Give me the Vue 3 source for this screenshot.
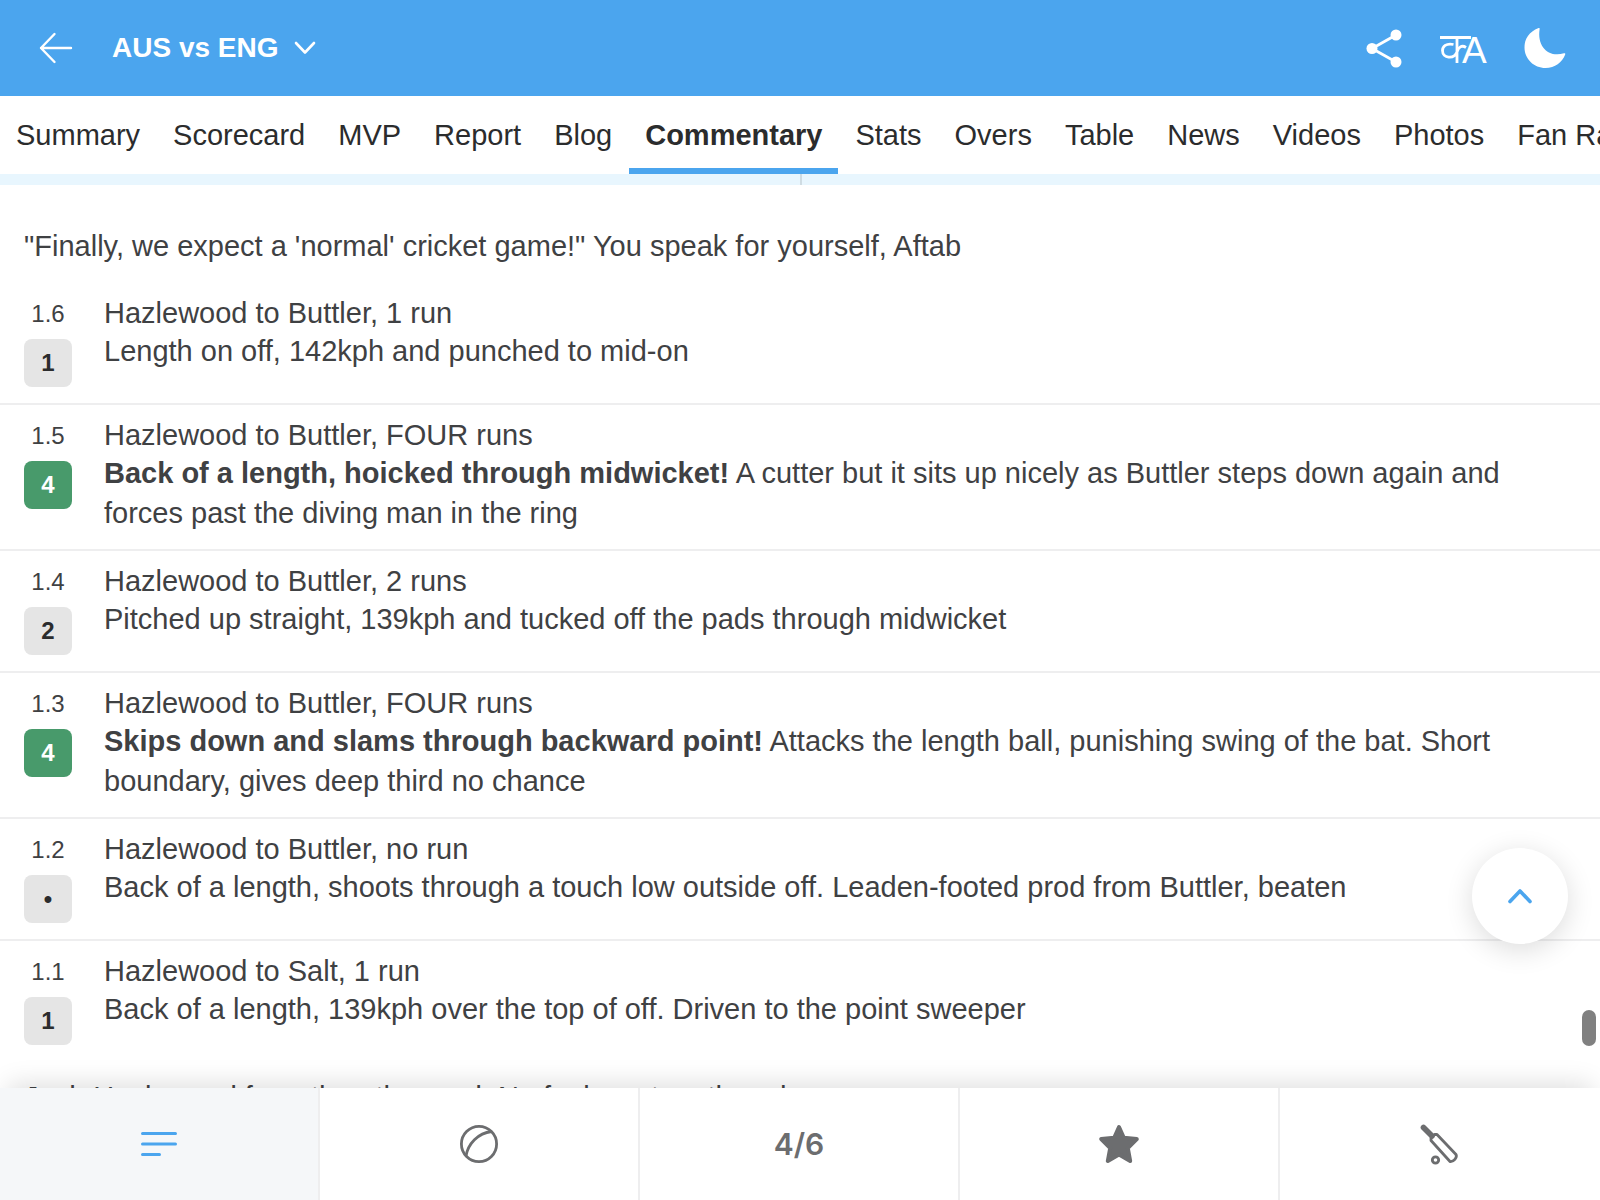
<script setup>
const tabs = ['Summary', 'Scorecard', 'MVP', 'Report', 'Blog', 'Commentary', 'Stats', 'Overs', 'Table', 'News', 'Videos', 'Photos', 'Fan Ratings']
const activeTab = 'Commentary'

const balls = [
  { over: '1.6', score: '1', title: 'Hazlewood to Buttler, 1 run', text: 'Length on off, 142kph and punched to mid-on' },
  { over: '1.5', score: '4', title: 'Hazlewood to Buttler, FOUR runs', lead: 'Back of a length, hoicked through midwicket!', text: 'A cutter but it sits up nicely as Buttler steps down again and forces past the diving man in the ring' },
  { over: '1.4', score: '2', title: 'Hazlewood to Buttler, 2 runs', text: 'Pitched up straight, 139kph and tucked off the pads through midwicket' },
  { over: '1.3', score: '4', title: 'Hazlewood to Buttler, FOUR runs', lead: 'Skips down and slams through backward point!', text: 'Attacks the length ball, punishing swing of the bat. Short boundary, gives deep third no chance' },
  { over: '1.2', score: '•', title: 'Hazlewood to Buttler, no run', text: 'Back of a length, shoots through a touch low outside off. Leaden-footed prod from Buttler, beaten' },
  { over: '1.1', score: '1', title: 'Hazlewood to Salt, 1 run', text: 'Back of a length, 139kph over the top of off. Driven to the point sweeper' },
]
</script>

<template>
  <div class="screen">
    <header class="topbar">
      <button class="back" aria-label="Back">
        <svg width="34" height="32" viewBox="0 0 34 32" fill="none" stroke="#fff" stroke-width="2.4" stroke-linecap="round" stroke-linejoin="round">
          <path d="M15.500 2L2 16L15.500 30M2 16H32" />
        </svg>
      </button>
      <button class="match">
        <span>AUS vs ENG</span>
        <svg width="22" height="14" viewBox="0 0 22 14" fill="none" stroke="#fff" stroke-width="2.6" stroke-linecap="round" stroke-linejoin="round">
          <path d="M2 2L11 11.500L20 2" />
        </svg>
      </button>
      <div class="actions">
        <button aria-label="Share">
          <svg width="36" height="40" viewBox="0 0 36 40" fill="#fff">
            <path d="M30 7L6 20.500L30 34" fill="none" stroke="#fff" stroke-width="2.8" />
            <circle cx="6" cy="20.500" r="5.500" />
            <circle cx="30" cy="7" r="5.500" />
            <circle cx="30" cy="34" r="5.500" />
          </svg>
        </button>
        <button aria-label="Change language">
          <svg class="lang" width="50" height="32" viewBox="0 0 50 32">
            <path d="M2 5.500H33M19 5V31M15.500 12.500C8 11 4.500 14.500 4.500 18.500C4.500 26.500 16 27.500 19 20C20.500 15.500 23.500 12.500 28 15.500" fill="none" stroke="#fff" stroke-width="2.800" />
            <text x="24" y="31" fill="#fff">A</text>
          </svg>
        </button>
        <button aria-label="Dark mode">
          <svg width="42" height="42" viewBox="0 0 42 42" fill="#fff">
            <path d="M14.600 1.100C5 5 0.500 12 0.500 20.500C0.500 32 10 41 21.500 41C31 41 38 35.500 41.200 27.500C41.500 26.500 41 26 40 26.300C24 31 13 19 15.600 2.200C15.800 1.200 15.400 0.900 14.600 1.100Z" />
          </svg>
        </button>
      </div>
    </header>

    <nav class="tabs" aria-label="Match sections">
      <a v-for="t in tabs" :key="t" href="#" :class="{ active: t === activeTab }">{{ t }}</a>
    </nav>

    <main class="feed">
      <div class="summary-strip"><div></div><div></div></div>
      <p class="note">"Finally, we expect a 'normal' cricket game!" You speak for yourself, Aftab</p>
      <article v-for="b in balls" :key="b.over" class="ball">
        <div class="mark">
          <span class="over">{{ b.over }}</span>
          <span class="score" :class="{ four: b.score === '4' }">{{ b.score }}</span>
        </div>
        <div class="detail">
          <h2>{{ b.title }}</h2>
          <p><strong v-if="b.lead">{{ b.lead }}</strong> {{ b.text }}</p>
        </div>
      </article>
      <p class="note">Josh Hazlewood from the other end. No funky extras though</p>
    </main>

    <nav class="dock" aria-label="Main">
      <button class="on" aria-label="Commentary">
        <svg width="38" height="26" viewBox="0 0 38 26" fill="none" stroke="#4ba5ee" stroke-width="3" stroke-linecap="round">
          <path d="M2.500 2.500H35.500M2.500 13H35.500M2.500 23.500H19.500" />
        </svg>
      </button>
      <button aria-label="Ball by ball">
        <svg width="40" height="40" viewBox="0 0 40 40" fill="none" stroke="#6c6d6f" stroke-width="2.800">
          <circle cx="20" cy="20" r="17.600" />
          <path d="M7 32C9 20 19 9 32.500 7.500" />
        </svg>
      </button>
      <button>4/6</button>
      <button aria-label="Favourites">
        <svg width="42" height="42" viewBox="0 0 42 42" fill="#6c6d6f" stroke="#6c6d6f" stroke-width="4" stroke-linejoin="round">
          <path d="M21 4L25.800 14.700L38.800 16L29.800 25L32.200 38L21 31.500L9.800 38L12.200 25L3.200 16L16.200 14.700Z" />
        </svg>
      </button>
      <button aria-label="Batting">
        <svg width="40" height="42" viewBox="0 0 40 42" fill="none" stroke="#6c6d6f">
          <path d="M4.500 4.500L13 13" stroke-width="5.600" stroke-linecap="round" />
          <path d="M12 17.500V15L15.500 11.500H18L37 31.500C38.500 34.500 34.500 39 31 38.500Z" stroke-width="2.800" stroke-linejoin="round" />
          <circle cx="16.500" cy="37" r="3.200" stroke-width="2.800" />
        </svg>
      </button>
    </nav>

    <button class="to-top" aria-label="Back to top">
      <svg width="28" height="18" viewBox="0 0 28 18" fill="none" stroke="#4ba5ee" stroke-width="3.600" stroke-linecap="round" stroke-linejoin="round">
        <path d="M4 14.500L14 4L24 14.500" />
      </svg>
    </button>
    <div class="thumb" aria-hidden="true"></div>
  </div>
</template>

<style>
body { margin: 0; background: #fff; }
</style>

<style scoped>
.screen {
  position: relative;
  height: 100vh;
  display: flex;
  flex-direction: column;
  overflow: hidden;
  background: #fff;
  color: #3f4143;
  font-family: "Liberation Sans", Arial, sans-serif;
  font-size: 29px;
  line-height: 40px;
}
button {
  border: 0;
  padding: 0;
  background: none;
  font: inherit;
  color: inherit;
  cursor: pointer;
}
svg { display: block; }

.topbar {
  flex: none;
  height: 96px;
  padding: 0 34px 0 39px;
  display: flex;
  align-items: center;
  background: #4ba5ee;
  color: #fff;
}
.back { margin-right: 39px; }
.match {
  display: flex;
  align-items: center;
  gap: 15px;
  font-size: 28px;
  font-weight: 700;
}
.actions {
  margin-left: auto;
  display: flex;
  align-items: center;
  gap: 36px;
}
.lang { font-size: 37px; }

.tabs {
  flex: none;
  display: flex;
  gap: 1px;
  overflow: hidden;
}
.tabs a {
  flex: none;
  padding: 0 16px;
  line-height: 78px;
  color: #2b2c2d;
  text-decoration: none;
  white-space: nowrap;
}
.tabs .active {
  font-weight: 700;
  box-shadow: inset 0 -6px #4ba5ee;
}

.feed {
  flex: 1;
  min-height: 0;
  overflow: hidden;
}
.summary-strip {
  display: flex;
  height: 11px;
  margin-bottom: 25px;
  background: #e8f6fe;
}
.summary-strip div {
  box-sizing: border-box;
  width: 50%;
}
.summary-strip div + div { border-left: 2px solid #cfdce3; }
.note {
  margin: 0;
  padding: 16px 24px 17px;
}
.ball {
  display: flex;
  gap: 32px;
  padding: 12px 24px 16px;
  border-bottom: 2px solid #eeeeef;
}
.ball:nth-last-child(2) { border-bottom: 0; }
.mark {
  flex: none;
  width: 48px;
  display: flex;
  flex-direction: column;
  align-items: center;
  gap: 6px;
  font-size: 24px;
}
.over { line-height: 38px; }
.score {
  width: 48px;
  border-radius: 8px;
  background: #e5e5e5;
  color: #2b2c2d;
  font-weight: 700;
  line-height: 48px;
  text-align: center;
}
.four {
  background: #489a6b;
  color: #fff;
}
.detail h2 {
  margin: 0;
  font-size: 29px;
  font-weight: 400;
  line-height: 36px;
}
.detail p { margin: 0; }

.dock {
  position: relative;
  flex: none;
  height: 112px;
  display: flex;
  background: #fff;
  box-shadow: 0 -12px 24px -8px rgba(0, 0, 0, 0.13);
}
.dock button {
  width: 20%;
  display: flex;
  align-items: center;
  justify-content: center;
  border-right: 2px solid #eeeeef;
  background: #fff;
  color: #6c6d6f;
  font-family: Inter, sans-serif;
  font-size: 30px;
  font-weight: 600;
}
.dock button:last-child { border-right-color: transparent; }
.dock .on { background: #f5f7f9; }

.to-top {
  position: absolute;
  right: 32px;
  bottom: 256px;
  width: 96px;
  height: 96px;
  display: flex;
  align-items: center;
  justify-content: center;
  border-radius: 50%;
  background: #fff;
  box-shadow: 0 6px 28px rgba(0, 0, 0, 0.14);
}
.thumb {
  position: absolute;
  right: 4px;
  bottom: 154px;
  width: 14px;
  height: 36px;
  border-radius: 7px;
  background: #808080;
}
</style>
